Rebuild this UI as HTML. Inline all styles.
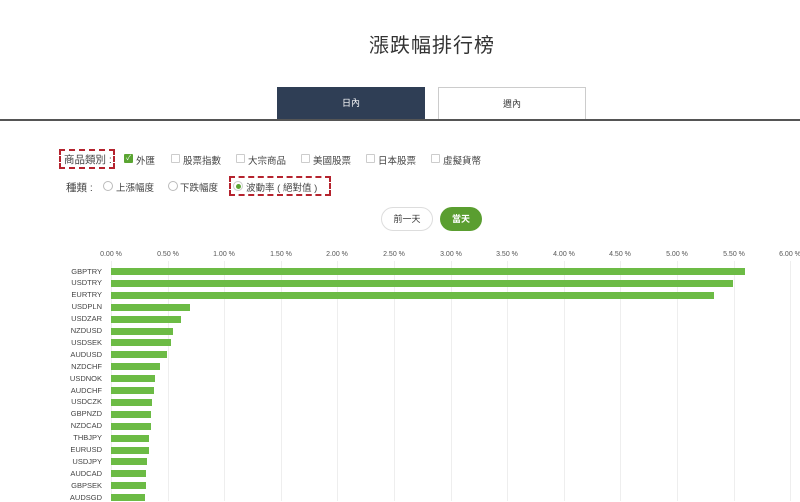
<!DOCTYPE html>
<html><head><meta charset="utf-8"><style>
*{margin:0;padding:0;box-sizing:border-box}
body{width:800px;height:500px;overflow:hidden;background:#fff;position:relative;font-family:"Liberation Sans","Noto Sans CJK TC",sans-serif;color:#333}
.a{position:absolute}
.t{font-size:20px;left:0;width:864px;text-align:center;top:29px;color:#333;letter-spacing:1px}
.tab{top:87px;height:33px;width:148px;font-size:9px;text-align:center;line-height:33px}
.f{font-size:9.5px;color:#444;white-space:nowrap}
.cb{width:9px;height:9px;border:1px solid #ccc;border-radius:1px;display:inline-block}
.rd{width:10px;height:10px;border:1px solid #bbb;border-radius:50%;display:inline-block}
.gl{top:261px;width:1px;height:240px;background:#eee}
.xl{top:251px;font-size:7px;line-height:8px;color:#555;width:40px;text-align:center}
.lb{font-size:7.5px;line-height:8px;height:8px;color:#444;width:46px;text-align:right;left:56px}
.bar{left:111px;height:7px;background:#6cbb45}
</style></head><body>
<div class="a t">漲跌幅排行榜</div>
<div class="a tab" style="left:277px;background:#2f3e55;color:#fff">日內</div>
<div class="a tab" style="left:438px;border:1px solid #ccc;border-bottom:none;color:#333">週內</div>
<div class="a" style="left:0;top:119px;width:800px;height:2px;background:#555"></div>

<div class="a" style="left:59px;top:149px;width:56px;height:20px;border:2px dashed #b5232e"></div>
<div class="a f" style="left:64px;top:152px;font-size:10.5px">商品類別 :</div>
<div class="a" style="left:124px;top:154px;width:9px;height:9px;background:#5aa532;border-radius:1px;color:#fff;font-size:7px;line-height:9px;text-align:center">✓</div>
<div class="a f" style="left:136px;top:153px">外匯</div>
<div class="a cb" style="left:171px;top:154px"></div><div class="a f" style="left:183px;top:153px">股票指數</div>
<div class="a cb" style="left:236px;top:154px"></div><div class="a f" style="left:248px;top:153px">大宗商品</div>
<div class="a cb" style="left:301px;top:154px"></div><div class="a f" style="left:313px;top:153px">美國股票</div>
<div class="a cb" style="left:366px;top:154px"></div><div class="a f" style="left:378px;top:153px">日本股票</div>
<div class="a cb" style="left:431px;top:154px"></div><div class="a f" style="left:443px;top:153px">虛擬貨幣</div>

<div class="a f" style="left:66px;top:180px;font-size:10.5px">種類 :</div>
<div class="a rd" style="left:103px;top:181px"></div><div class="a f" style="left:116px;top:180px">上漲幅度</div>
<div class="a rd" style="left:168px;top:181px"></div><div class="a f" style="left:180px;top:180px">下跌幅度</div>
<div class="a" style="left:229px;top:176px;width:102px;height:20px;border:2px dashed #b5232e"></div>
<div class="a rd" style="left:233px;top:181px;border-color:#ccc"></div><div class="a" style="left:236px;top:184px;width:5px;height:5px;border-radius:50%;background:#5aa532"></div>
<div class="a f" style="left:246px;top:180px">波動率 ( 絕對值 )</div>

<div class="a" style="left:381px;top:207px;width:52px;height:24px;border:1px solid #ddd;border-radius:12px;font-size:9px;text-align:center;line-height:22px">前一天</div>
<div class="a" style="left:440px;top:207px;width:42px;height:24px;background:#5a9e30;border-radius:12px;font-size:9px;color:#fff;text-align:center;line-height:24px;font-weight:bold">當天</div>

<div id="g"></div>
<script>
var h='',s=56.6;
for(var i=0;i<=12;i++){var x=111+i*s;h+='<div class="a gl" style="left:'+Math.round(x)+'px"></div><div class="a xl" style="left:'+Math.round(x-20)+'px">'+(i*0.5).toFixed(2)+' %</div>';}
var d=[["GBPTRY",745],["USDTRY",733],["EURTRY",714],["USDPLN",190],["USDZAR",181],["NZDUSD",173],["USDSEK",171],["AUDUSD",167],["NZDCHF",160],["USDNOK",155],["AUDCHF",154],["USDCZK",152],["GBPNZD",151],["NZDCAD",151],["THBJPY",149],["EURUSD",149],["USDJPY",147],["AUDCAD",146],["GBPSEK",146],["AUDSGD",145]];
d.forEach(function(r,i){var y=271+i*11.9;h+='<div class="a lb" style="top:'+(y-3.5).toFixed(1)+'px">'+r[0]+'</div><div class="a bar" style="top:'+(y-3).toFixed(1)+'px;width:'+(r[1]-111)+'px"></div>';});
document.getElementById('g').innerHTML=h;
</script>
</body></html>
